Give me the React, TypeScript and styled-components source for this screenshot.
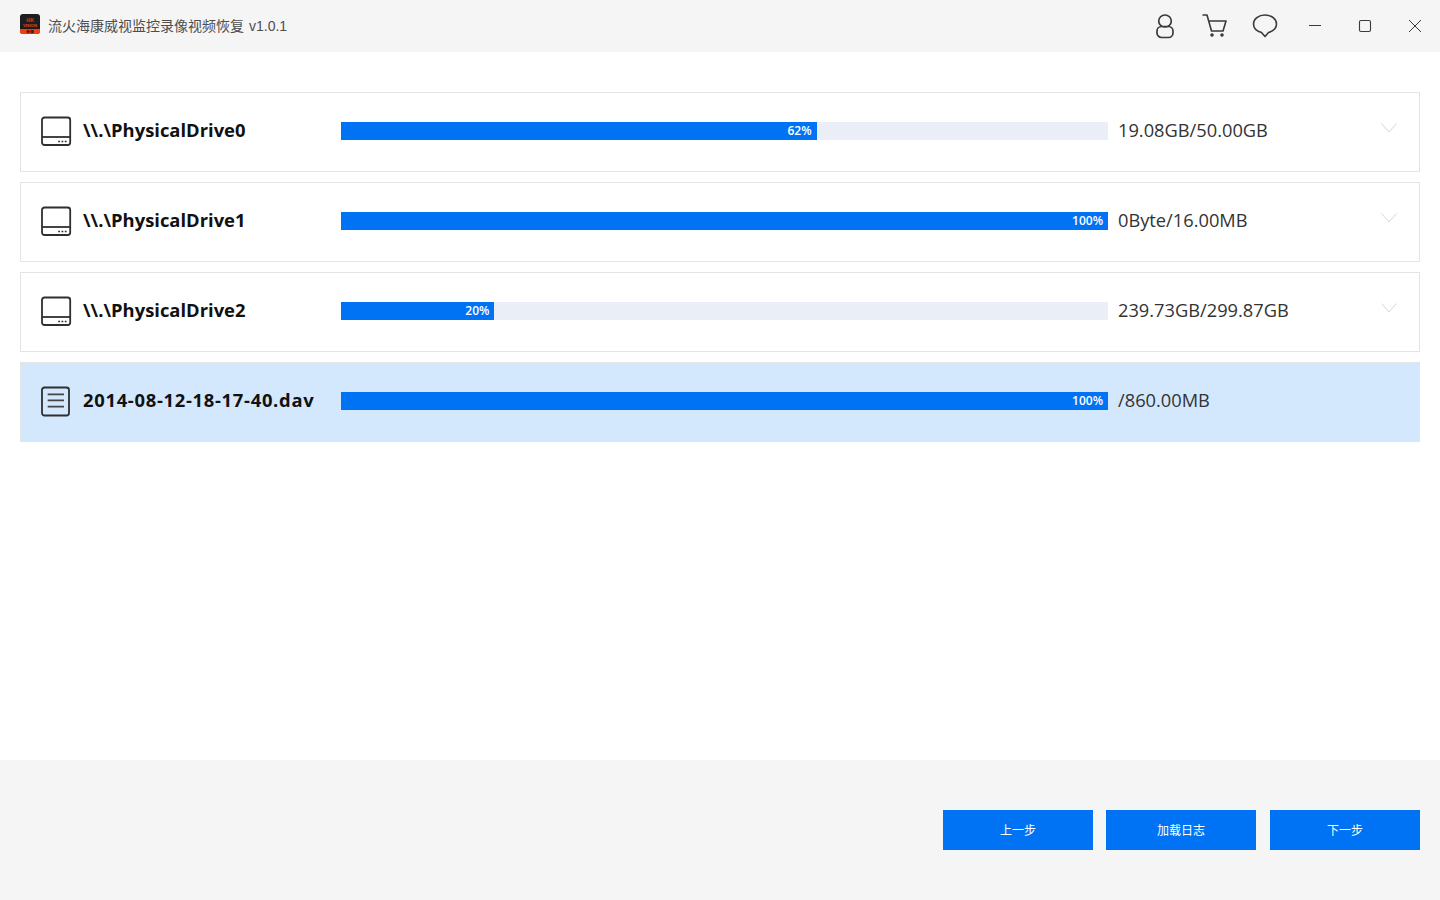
import { createGlobalStyle, styled } from "styled-components";

const GlobalStyle = createGlobalStyle`
  html, body {
    margin: 0;
    padding: 0;
    background: #fff;
    font-family: "Open Sans", "Noto Sans CJK SC", sans-serif;
  }
  * {
    box-sizing: border-box;
  }
`;

const Page = styled.div`
  width: 1440px;
  height: 900px;
  display: flex;
  flex-direction: column;
  overflow: hidden;
`;

const TitleBar = styled.header`
  height: 52px;
  flex-shrink: 0;
  background: #f5f5f5;
  display: flex;
  align-items: center;
  padding-left: 20px;
`;

const Logo = styled.svg`
  width: 20px;
  height: 20px;
  margin-top: -4px;
  flex-shrink: 0;
  text {
    font-family: "Liberation Sans", sans-serif;
    font-weight: 700;
    text-anchor: middle;
  }
`;

const Title = styled.h1`
  margin: 0 0 0 8px;
  font-size: 14px;
  font-weight: 400;
  color: #4d4d4d;
  line-height: 20px;
  flex: 1;
  span {
    font-family: "Liberation Sans", sans-serif;
    margin-left: 5px;
  }
`;

const BarButton = styled.div`
  width: 50px;
  height: 52px;
  display: flex;
  align-items: center;
  justify-content: center;
  svg {
    width: 30px;
    height: 30px;
    fill: none;
    stroke: #3a3a3a;
  }
`;

const DriveList = styled.main`
  flex: 1;
  padding: 40px 20px 0;
  display: flex;
  flex-direction: column;
  gap: 10px;
`;

const Row = styled.section<{ $selected?: boolean }>`
  height: 80px;
  display: flex;
  align-items: center;
  padding: 0 0 2px 20px;
  border: 1px solid #e4e4e4;
  background: ${(props) => (props.$selected ? "#d3e7fd" : "#fff")};
`;

const RowIcon = styled.svg`
  width: 32px;
  height: 32px;
  margin-top: 2px;
  flex-shrink: 0;
  fill: none;
  stroke: #2f2f2f;
`;

const RowName = styled.div<{ $selected?: boolean }>`
  width: 268px;
  padding-left: 10px;
  margin-bottom: 4px;
  flex-shrink: 0;
  font-size: 18.4px;
  font-weight: 700;
  letter-spacing: ${(props) => (props.$selected ? "0.7px" : "0")};
  color: #111;
  white-space: nowrap;
`;

const Track = styled.div`
  width: 767px;
  height: 18px;
  flex-shrink: 0;
  background: #eaeef6;
`;

const Fill = styled.div`
  height: 100%;
  background: #0073f5;
  color: #fff;
  font-size: 12px;
  font-weight: 600;
  line-height: 18px;
  text-align: right;
  padding-right: 5px;
`;

const RowSize = styled.div`
  width: 262px;
  margin: 0 0 4px 10px;
  flex-shrink: 0;
  font-size: 18.25px;
  color: #333;
  white-space: nowrap;
`;

const Chevron = styled.svg`
  width: 18px;
  height: 12px;
  margin-top: -6px;
  fill: none;
  stroke: #d6d6d6;
`;

const Footer = styled.footer`
  height: 140px;
  flex-shrink: 0;
  background: #f5f5f5;
  display: flex;
  justify-content: flex-end;
  gap: 13px;
  padding: 50px 20px 0;
`;

const ActionButton = styled.button`
  width: 150px;
  height: 40px;
  padding: 0 0 2px;
  border: 0;
  background: #0073f5;
  color: #fff;
  font-family: "Noto Sans CJK SC", sans-serif;
  font-size: 12px;
  &:last-child {
    margin-left: 1px;
  }
`;

const rows = [
  { name: "\\\\.\\PhysicalDrive0", percent: 62, size: "19.08GB/50.00GB", kind: "disk" },
  { name: "\\\\.\\PhysicalDrive1", percent: 100, size: "0Byte/16.00MB", kind: "disk" },
  { name: "\\\\.\\PhysicalDrive2", percent: 20, size: "239.73GB/299.87GB", kind: "disk" },
  { name: "2014-08-12-18-17-40.dav", percent: 100, size: "/860.00MB", kind: "file" },
];

const DiskIcon = () => (
  <RowIcon viewBox="0 0 32 32">
    <rect x="1" y="1.500" width="28.200" height="27.500" rx="2.500" strokeWidth="1.800" />
    <path d="M1 21h28.200" strokeWidth="1.800" />
    <path d="M17.200 25.500h1.800M20.500 25.500h1.800M23.800 25.500h1.800" strokeWidth="1.500" />
  </RowIcon>
);

const FileIcon = () => (
  <RowIcon viewBox="0 0 32 32">
    <rect x="1" y="1.500" width="27" height="28" rx="2.500" strokeWidth="1.800" />
    <path d="M6.700 8.300H23M6.700 14.300H23M6.700 20.700H23" strokeWidth="1.800" stroke="#444" />
  </RowIcon>
);

const App = () => {
  return (
    <Page>
      <GlobalStyle />
      <TitleBar>
        <Logo viewBox="0 0 20 20">
          <rect width="20" height="20" rx="3" fill="#1d1d1f" />
          <path d="M0 15h20v2a3 3 0 0 1-3 3H3a3 3 0 0 1-3-3z" fill="#f2400c" />
          <text x="10" y="8" fontSize="4.500" fill="#d8401a">HIK</text>
          <text x="10" y="12.500" fontSize="4.200" fill="#e0481c">VISION</text>
          <text x="10" y="18.800" fontSize="3.500" fill="#3a1206">录像</text>
        </Logo>
        <Title>
          流火海康威视监控录像视频恢复<span>v1.0.1</span>
        </Title>
        <BarButton>
          <svg viewBox="0 0 30 30" strokeWidth="1.700">
            <ellipse cx="15" cy="10" rx="6.300" ry="6" />
            <rect x="7" y="15.500" width="16" height="11" rx="4.500" />
          </svg>
        </BarButton>
        <BarButton>
          <svg viewBox="0 0 30 30" strokeWidth="1.600" strokeLinejoin="round">
            <path d="M2.500 4h4.500l4.500 16h11.500l3-10H8.500" />
            <circle cx="12" cy="24" r="1" fill="#3a3a3a" />
            <circle cx="22" cy="24" r="1" fill="#3a3a3a" />
          </svg>
        </BarButton>
        <BarButton>
          <svg viewBox="0 0 30 30" strokeWidth="1.600" strokeLinejoin="round">
            <path d="M15 4C21.500 4 26.500 8 26.500 13C26.500 17 23.500 20 18.500 21.500L15 25.500L11.500 21.500C6.500 20 3.500 17 3.500 13C3.500 8 8.500 4 15 4z" />
          </svg>
        </BarButton>
        <BarButton>
          <svg viewBox="0 0 30 30" strokeWidth="1">
            <path d="M9 14.500h12" />
          </svg>
        </BarButton>
        <BarButton>
          <svg viewBox="0 0 30 30" strokeWidth="1.100">
            <rect x="9.500" y="9.500" width="11" height="11" rx="1.500" />
          </svg>
        </BarButton>
        <BarButton>
          <svg viewBox="0 0 30 30" strokeWidth="1">
            <path d="M9 9l12 12M21 9L9 21" />
          </svg>
        </BarButton>
      </TitleBar>
      <DriveList>
        {rows.map((row) => (
          <Row key={row.name} $selected={row.kind === "file"}>
            {row.kind === "file" ? <FileIcon /> : <DiskIcon />}
            <RowName $selected={row.kind === "file"}>{row.name}</RowName>
            <Track>
              <Fill style={{ width: `${row.percent}%` }}>{row.percent}%</Fill>
            </Track>
            <RowSize>{row.size}</RowSize>
            {row.kind === "disk" && (
              <Chevron viewBox="0 0 18 12" strokeWidth="1">
                <path d="M1.500 1.500L9 10l7.500-8.500" />
              </Chevron>
            )}
          </Row>
        ))}
      </DriveList>
      <Footer>
        <ActionButton>上一步</ActionButton>
        <ActionButton>加载日志</ActionButton>
        <ActionButton>下一步</ActionButton>
      </Footer>
    </Page>
  );
};

export default App;
